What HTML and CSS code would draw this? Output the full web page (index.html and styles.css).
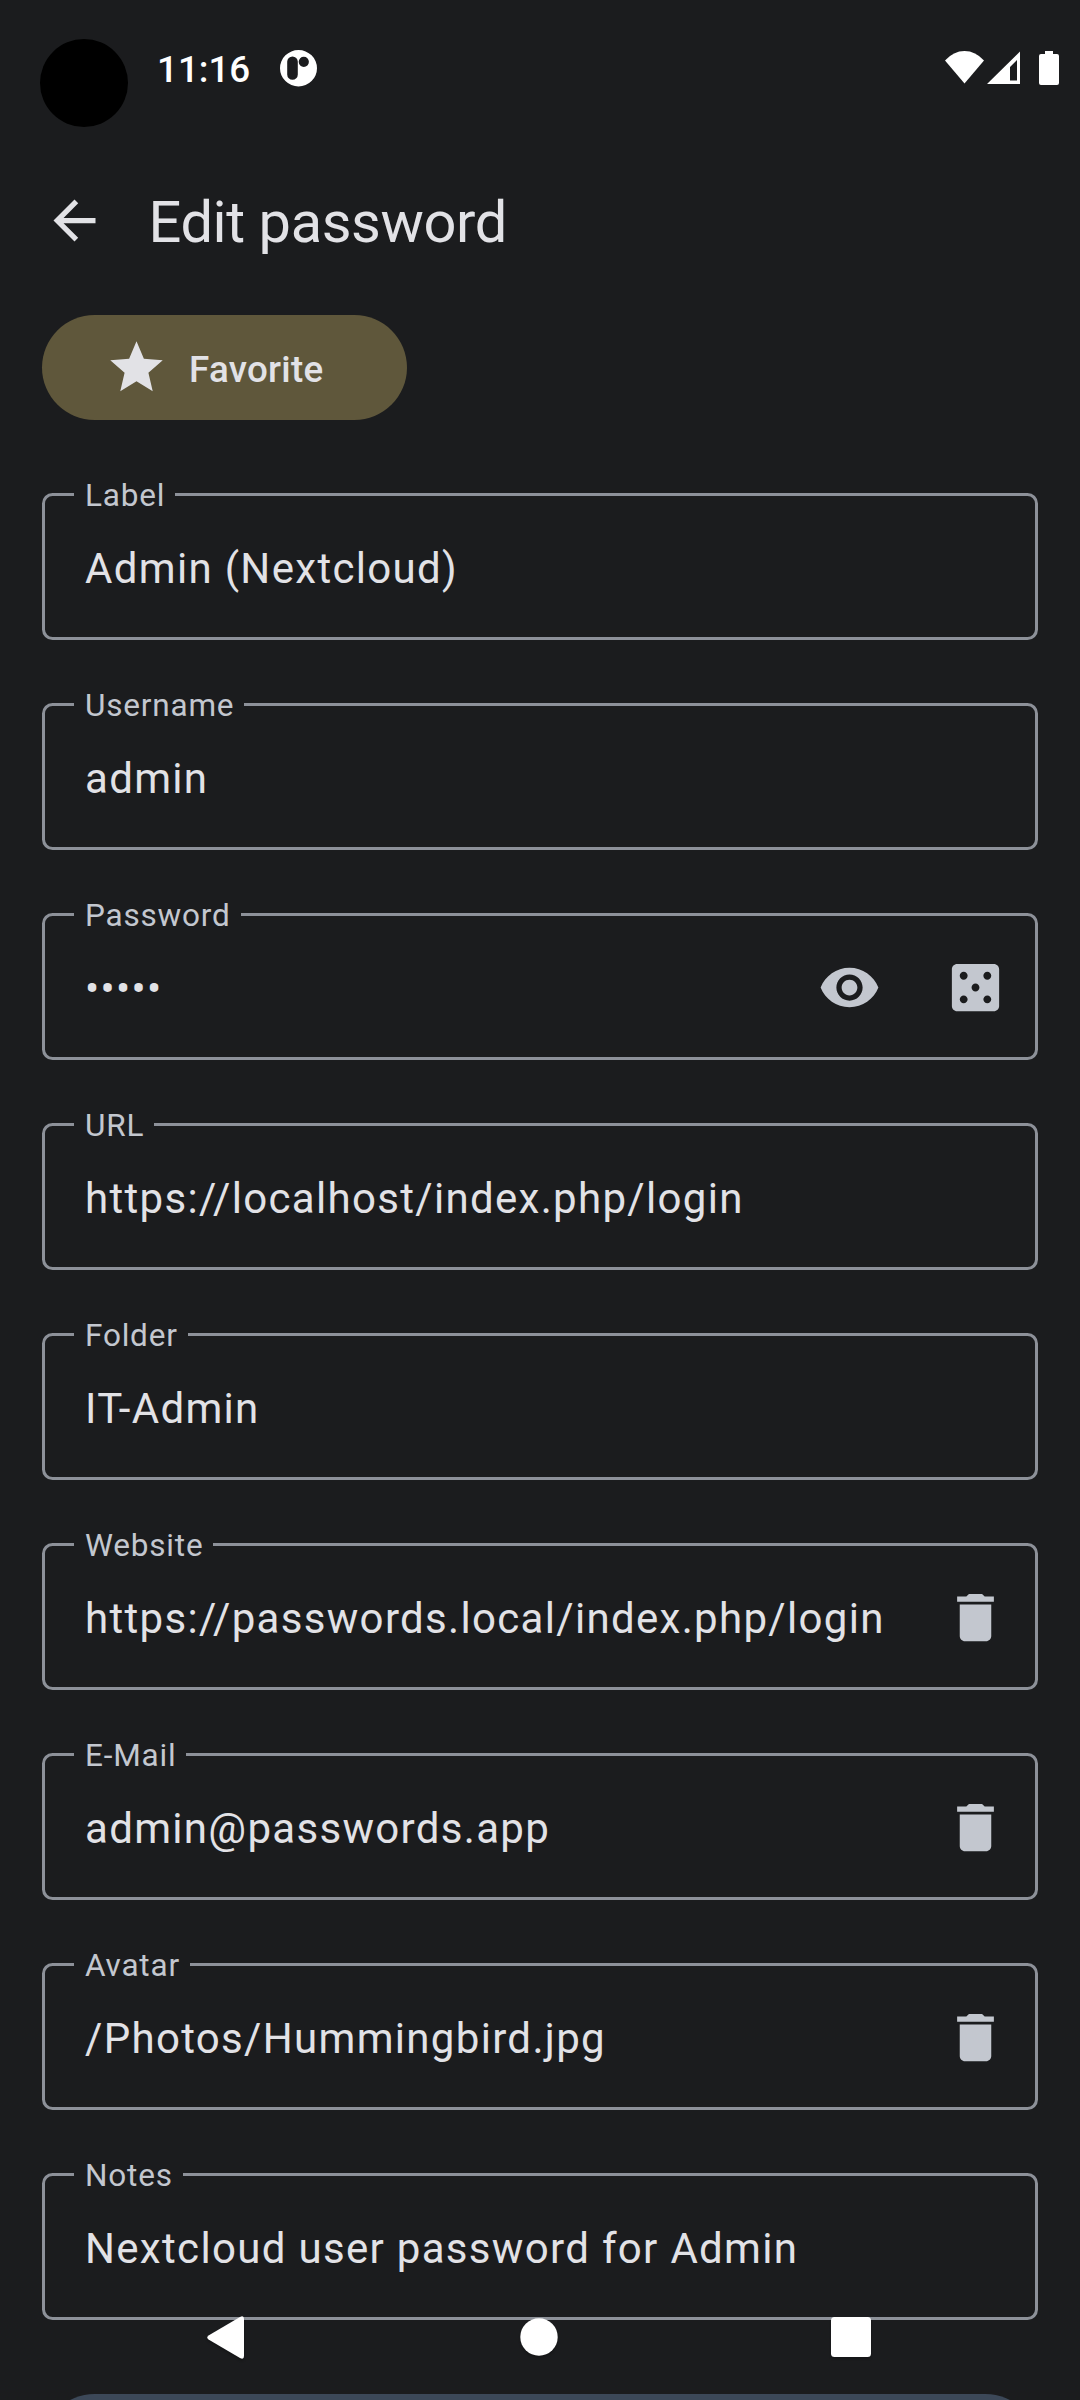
FILE: index.html
```html
<!DOCTYPE html>
<html lang="en">
<head>
<meta charset="utf-8">
<title>Edit password</title>
<link rel="stylesheet" href="styles.css">
</head>
<body>
<svg class="defs" aria-hidden="true">
  <symbol id="trash" viewBox="0 0 24 24"><path d="M6 19c0 1.100.9 2 2 2h8c1.100 0 2-.9 2-2V7H6v12zM19 4h-3.500l-1-1h-5l-1 1H5v2h14V4z"/></symbol>
</svg>
<div class="screen">
  <header class="status">
    <span class="camera"></span>
    <span class="clock">11:16</span>
    <svg class="notice" viewBox="0 0 37 37"><path fill-rule="evenodd" d="M18.500 0a18.500 18.200 0 1 1 0 36.400a18.500 18.200 0 1 1 0-36.400zM12.500 6.500a5.300 5.300 0 0 0-5.300 5.300v12.600a5.300 5.300 0 0 0 10.600 0V11.800a5.300 5.300 0 0 0-5.300-5.300zM23.800 6.700a5.100 5.100 0 1 0 0 10.200a5.100 5.100 0 1 0 0-10.200z"/></svg>
    <svg class="signals" viewBox="0 0 114 34"><path d="M0 9.500Q8.500 0 19.500 0T39 9.500L19.500 32.500z"/><path fill-rule="evenodd" d="M75 0.500V33H42zM72 9L65 16V29.500H72z"/><path d="M100 0h8v3h4q2 0 2 2v27q0 2-2 2H96q-2 0-2-2V5q0-2 2-2h4z"/></svg>
  </header>

  <div class="toolbar">
    <svg class="icon" viewBox="0 0 24 24"><path d="M20 11H7.830l5.590-5.590L12 4l-8 8 8 8 1.410-1.410L7.830 13H20v-2z"/></svg>
    <h1 class="title">Edit password</h1>
  </div>

  <main class="form">
    <button class="favorite" type="button">
      <svg class="icon" viewBox="0 0 24 24"><path d="M12 17.270L18.180 21l-1.640-7.030L22 9.240l-7.190-.61L12 2 9.190 8.630 2 9.240l5.460 4.730L5.820 21z"/></svg>
      <span>Favorite</span>
    </button>

    <fieldset class="field"><legend>Label</legend><span class="value">Admin (Nextcloud)</span></fieldset>
    <fieldset class="field"><legend>Username</legend><span class="value">admin</span></fieldset>
    <fieldset class="field"><legend>Password</legend>
      <div class="row">
        <span class="value">•••••</span>
        <span class="actions">
          <svg class="icon" viewBox="0 0 24 24"><path d="M12 4.500C7 4.500 2.730 7.610 1 12c1.730 4.390 6 7.500 11 7.500s9.270-3.110 11-7.500c-1.730-4.390-6-7.500-11-7.500zM12 17c-2.760 0-5-2.240-5-5s2.240-5 5-5 5 2.240 5 5-2.240 5-5 5zm0-8c-1.660 0-3 1.340-3 3s1.340 3 3 3 3-1.340 3-3-1.340-3-3-3z"/></svg>
          <svg class="icon" viewBox="0 0 24 24"><path d="M19 3H5c-1.100 0-2 .9-2 2v14c0 1.100.9 2 2 2h14c1.100 0 2-.9 2-2V5c0-1.100-.9-2-2-2zM7.500 18c-.83 0-1.500-.67-1.500-1.500S6.670 15 7.500 15s1.500.67 1.500 1.500S8.330 18 7.500 18zm0-9C6.670 9 6 8.330 6 7.500S6.670 6 7.500 6 9 6.670 9 7.500 8.330 9 7.500 9zm4.500 4.500c-.83 0-1.500-.67-1.500-1.500s.67-1.500 1.500-1.500 1.500.67 1.500 1.500-.67 1.500-1.500 1.500zm4.500 4.500c-.83 0-1.500-.67-1.500-1.500s.67-1.500 1.500-1.500 1.500.67 1.500 1.500-.67 1.500-1.500 1.500zm0-9c-.83 0-1.500-.67-1.500-1.500S15.670 6 16.500 6s1.500.67 1.500 1.500S17.330 9 16.500 9z"/></svg>
        </span>
      </div>
    </fieldset>
    <fieldset class="field"><legend>URL</legend><span class="value">https://localhost/index.php/login</span></fieldset>
    <fieldset class="field"><legend>Folder</legend><span class="value">IT-Admin</span></fieldset>
    <fieldset class="field"><legend>Website</legend>
      <div class="row"><span class="value">https://passwords.local/index.php/login</span><span class="actions"><svg class="icon"><use href="#trash"/></svg></span></div>
    </fieldset>
    <fieldset class="field"><legend>E-Mail</legend>
      <div class="row"><span class="value">admin@passwords.app</span><span class="actions"><svg class="icon"><use href="#trash"/></svg></span></div>
    </fieldset>
    <fieldset class="field"><legend>Avatar</legend>
      <div class="row"><span class="value">/Photos/Hummingbird.jpg</span><span class="actions"><svg class="icon"><use href="#trash"/></svg></span></div>
    </fieldset>
    <fieldset class="field"><legend>Notes</legend><span class="value">Nextcloud user password for Admin</span></fieldset>
    <div class="next-button"></div>
  </main>

  <nav class="navbar">
    <svg viewBox="0 0 37 43"><path d="M37 3v37q0 4-4 2L1.500 23.500q-2.500-2 0-4L33 1q4-2 4 2z"/></svg>
    <svg viewBox="0 0 38 38"><circle cx="19" cy="19" r="18.700"/></svg>
    <svg viewBox="0 0 40 40"><rect width="40" height="40" rx="3.500"/></svg>
  </nav>
</div>
</body>
</html>
```
FILE: styles.css
```css
* { box-sizing: border-box; }

body {
  margin: 0;
  background: #1b1c1e;
  color: #e2e2e6;
  font-family: Roboto, sans-serif;
}

.defs { display: none; }

svg { display: block; flex: none; fill: currentColor; }

.icon { width: 63px; height: 63px; }

.screen {
  position: relative;
  width: 1080px;
  height: 2400px;
  overflow: hidden;
}

.status {
  display: flex;
  align-items: flex-start;
  height: 147px;
  padding: 39px 21px 0 40px;
  color: #fff;
}

.camera {
  width: 88px;
  height: 88px;
  border-radius: 50%;
  background: #000;
}

.clock {
  width: 95px;
  margin: 9px 0 0 29px;
  font-size: 36.75px;
  font-weight: 500;
  line-height: 43px;
}

.notice { width: 37px; height: 37px; margin: 11px 0 0 28px; }

.signals { width: 114px; height: 34px; margin: 12px 0 0 auto; }

.toolbar {
  display: flex;
  align-items: center;
  gap: 43px;
  height: 147px;
  padding-left: 42.5px;
}

.title {
  margin: 3px 0 0;
  font-size: 57.75px;
  font-weight: 400;
  line-height: 72px;
  letter-spacing: -0.4px;
}

.form {
  display: flex;
  flex-direction: column;
  gap: 45px;
  padding: 21px 42px 0;
}

.favorite {
  display: flex;
  align-items: center;
  align-self: flex-start;
  gap: 21px;
  width: 365px;
  height: 105px;
  margin-bottom: 10px;
  padding: 0 0 0 63px;
  border: 0;
  border-radius: 52.5px;
  background: #5f573b;
  color: inherit;
  font: 500 36.75px/52px Roboto, sans-serif;
  letter-spacing: 0.26px;
}

.favorite span { padding-top: 5px; }

.field {
  height: 165px;
  min-width: 0;
  margin: 0;
  padding: 0 28px 0 29px;
  border: 3px solid #8d9199;
  border-radius: 10.5px;
}

.field legend {
  height: 39px;
  padding: 0 10px 0 11px;
  color: #c3c7cf;
  font-size: 31.5px;
  line-height: 42px;
  letter-spacing: 0.8px;
}

.row { display: flex; justify-content: space-between; }

.value {
  display: block;
  padding: 30px 0 0 11px;
  font-size: 42px;
  line-height: 50px;
  letter-spacing: 1.32px;
  white-space: nowrap;
}

.actions {
  display: flex;
  gap: 63px;
  padding-top: 22px;
  color: #c3c7cf;
}

.next-button {
  height: 105px;
  margin-top: 29px;
  border-radius: 52.5px;
  background: #3c4858;
}

.navbar {
  position: absolute;
  left: 0;
  right: 0;
  bottom: 0;
  display: grid;
  grid-template-columns: 37px 38px 40px;
  column-gap: 277px 272px;
  justify-content: space-between;
  align-items: center;
  height: 126px;
  padding: 0 209px 0 207px;
  color: #fff;
  filter: drop-shadow(0 2px 1px rgba(0, 0, 0, 0.25));
}

.navbar svg:nth-child(1) { width: 37px; height: 43px; }
.navbar svg:nth-child(2) { width: 38px; height: 38px; margin-left: 1.5px; }
.navbar svg:nth-child(3) { width: 40px; height: 40px; }
```
